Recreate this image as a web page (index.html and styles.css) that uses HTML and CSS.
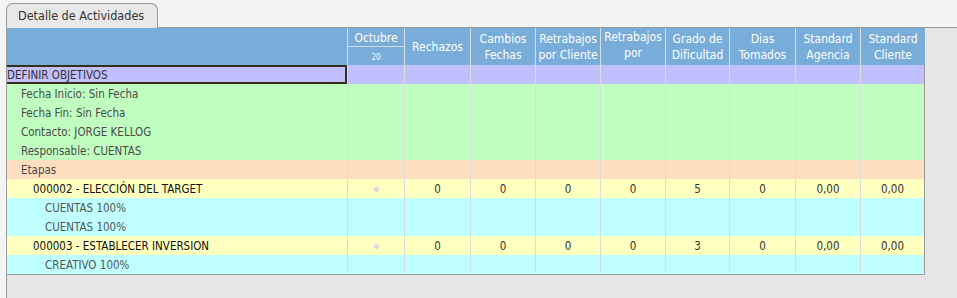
FILE: index.html
```html
<!DOCTYPE html>
<html lang="es">
<head>
    <meta charset="UTF-8">
    <title>Detalle de Actividades</title>
    <link rel="stylesheet" href="styles.css">
</head>
<body>
    <!-- Tab strip -->
    <div class="tabs">
        <div class="tab">Detalle de Actividades</div>
    </div>

    <!-- Panel with the activity grid -->
    <div class="panel">
        <div class="grid">
            <div class="hd first span2"></div>
            <div class="hd month">Octubre</div>
            <div class="hd span2">Rechazos</div>
            <div class="hd span2">Cambios<br>Fechas</div>
            <div class="hd span2">Retrabajos<br>por Cliente</div>
            <div class="hd span2 high">Retrabajos<br>por</div>
            <div class="hd span2">Grado de<br>Dificultad</div>
            <div class="hd span2">Dias<br>Tomados</div>
            <div class="hd span2">Standard<br>Agencia</div>
            <div class="hd span2">Standard<br>Cliente</div>
            <div class="hd day">20</div>

            <!-- DEFINIR OBJETIVOS -->
            <div class="c purple first selected">DEFINIR OBJETIVOS</div>
            <div class="c purple"></div><div class="c purple"></div><div class="c purple"></div><div class="c purple"></div><div class="c purple"></div><div class="c purple"></div><div class="c purple"></div><div class="c purple"></div><div class="c purple"></div>

            <div class="c green first lvl1">Fecha Inicio: Sin Fecha</div>
            <div class="c green"></div><div class="c green"></div><div class="c green"></div><div class="c green"></div><div class="c green"></div><div class="c green"></div><div class="c green"></div><div class="c green"></div><div class="c green"></div>

            <div class="c green first lvl1">Fecha Fin: Sin Fecha</div>
            <div class="c green"></div><div class="c green"></div><div class="c green"></div><div class="c green"></div><div class="c green"></div><div class="c green"></div><div class="c green"></div><div class="c green"></div><div class="c green"></div>

            <div class="c green first lvl1">Contacto: JORGE KELLOG</div>
            <div class="c green"></div><div class="c green"></div><div class="c green"></div><div class="c green"></div><div class="c green"></div><div class="c green"></div><div class="c green"></div><div class="c green"></div><div class="c green"></div>

            <div class="c green first lvl1">Responsable: CUENTAS</div>
            <div class="c green"></div><div class="c green"></div><div class="c green"></div><div class="c green"></div><div class="c green"></div><div class="c green"></div><div class="c green"></div><div class="c green"></div><div class="c green"></div>

            <div class="c peach first lvl1">Etapas</div>
            <div class="c peach"></div><div class="c peach"></div><div class="c peach"></div><div class="c peach"></div><div class="c peach"></div><div class="c peach"></div><div class="c peach"></div><div class="c peach"></div><div class="c peach"></div>

            <!-- Etapa 000002 -->
            <div class="c yellow first lvl2">000002 - ELECCIÓN DEL TARGET</div>
            <div class="c yellow num"><span class="dot"></span></div>
            <div class="c yellow num">0</div><div class="c yellow num">0</div><div class="c yellow num">0</div><div class="c yellow num">0</div>
            <div class="c yellow num">5</div><div class="c yellow num">0</div><div class="c yellow num">0,00</div><div class="c yellow num">0,00</div>

            <div class="c cyan first lvl3">CUENTAS 100%</div>
            <div class="c cyan"></div><div class="c cyan"></div><div class="c cyan"></div><div class="c cyan"></div><div class="c cyan"></div><div class="c cyan"></div><div class="c cyan"></div><div class="c cyan"></div><div class="c cyan"></div>

            <div class="c cyan first lvl3">CUENTAS 100%</div>
            <div class="c cyan"></div><div class="c cyan"></div><div class="c cyan"></div><div class="c cyan"></div><div class="c cyan"></div><div class="c cyan"></div><div class="c cyan"></div><div class="c cyan"></div><div class="c cyan"></div>

            <!-- Etapa 000003 -->
            <div class="c yellow first lvl2">000003 - ESTABLECER INVERSION</div>
            <div class="c yellow num"><span class="dot"></span></div>
            <div class="c yellow num">0</div><div class="c yellow num">0</div><div class="c yellow num">0</div><div class="c yellow num">0</div>
            <div class="c yellow num">3</div><div class="c yellow num">0</div><div class="c yellow num">0,00</div><div class="c yellow num">0,00</div>

            <div class="c cyan first lvl3">CREATIVO 100%</div>
            <div class="c cyan"></div><div class="c cyan"></div><div class="c cyan"></div><div class="c cyan"></div><div class="c cyan"></div><div class="c cyan"></div><div class="c cyan"></div><div class="c cyan"></div><div class="c cyan"></div>
        </div>
    </div>
</body>
</html>
```

FILE: styles.css
```css
/* Detalle de actividades - grid view */
body {
    margin: 0;
    background: #f4f4f4;
    font-family: "DejaVu Sans Condensed", "DejaVu Sans", sans-serif;
    font-size: 11.5px;
    color: #333;
    height: 298px;
    overflow: hidden;
}

.tabs {
    height: 27px;
    padding-left: 6px;
    display: flex;
    align-items: flex-end;
}

.tab {
    position: relative;
    z-index: 1;
    box-sizing: border-box;
    width: 152px;
    height: 25px;
    margin-bottom: -1px;
    padding: 4px 0 0 11px;
    background: #e8e8e8;
    border: 1px solid #9a9a9a;
    border-bottom: none;
    border-radius: 7px 7px 0 0;
    font-size: 12.5px;
    color: #333;
}

.panel {
    margin-left: 6px;
    height: 271px;
    background: #e6e6e6;
    border-left: 1px solid #9a9a9a;
    border-top: 1px solid #9a9a9a;
}

.grid {
    display: grid;
    grid-template-columns: 340px 57px 66px 65px 65px 65px 64px 66px 65px 65px;
    grid-template-rows: 19px 18px repeat(11, 19px);
    width: 918px;
    border-bottom: 1px solid #a0a0a0;
}

/* header */
.hd {
    box-sizing: border-box;
    background: #78acd9;
    color: #fff;
    font-size: 12px;
    line-height: 16px;
    text-align: center;
    border-left: 1px solid #d6dde4;
    display: flex;
    align-items: center;
    justify-content: center;
}

.hd.first {
    border-left: none;
}

.hd:last-of-type {
    border-right: 1px solid #9a9a9a;
}

.span2 {
    grid-row: span 2;
}

.hd.high {
    align-items: flex-start;
    padding-top: 1px;
}

.hd.month {
    border-bottom: 1px solid #d6dde4;
    padding-top: 1px;
}

.hd.day {
    grid-column: 2;
    font-size: 8px;
    padding-top: 3px;
}

/* body cells */
.c {
    box-sizing: border-box;
    line-height: 19px;
    padding-top: 1px;
    border-left: 1px solid #dcdcdc;
    white-space: nowrap;
    overflow: hidden;
}

.c.first {
    border-left: none;
}

.c:nth-child(10n + 11) {
    border-right: 1px solid #9a9a9a;
}

.purple { background: #c0c0ff; }
.green  { background: #c0ffc0; }
.peach  { background: #ffdfc0; }
.yellow { background: #ffffc0; }
.cyan   { background: #c0ffff; }

.selected {
    border: 2px solid #352f1c;
    line-height: 15px;
    padding: 1px 0 0 0;
    color: #333;
}

.lvl1 { padding-left: 14px; color: #4a4a4a; }
.lvl2 { padding-left: 26px; color: #111; }
.lvl3 { padding-left: 38px; color: #555; }

.num {
    text-align: center;
    color: #333;
}

.dot {
    display: inline-block;
    width: 5px;
    height: 5px;
    background: #dcdcdc;
    transform: rotate(45deg);
    vertical-align: middle;
}
```
